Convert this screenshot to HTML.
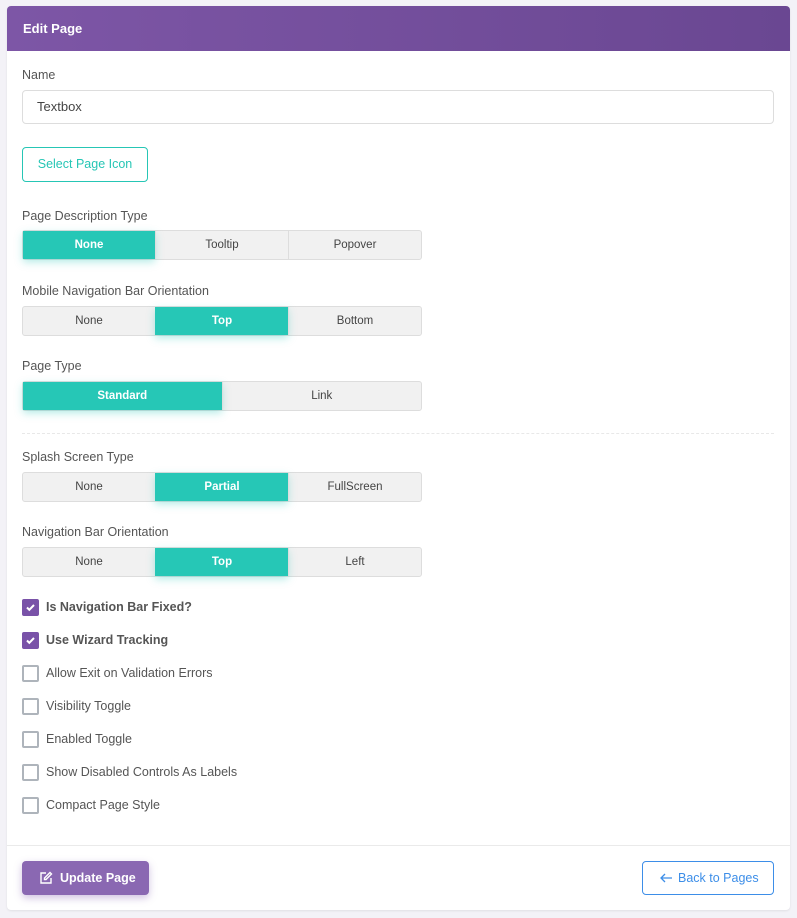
<!DOCTYPE html>
<html><head><style>
*{box-sizing:border-box;margin:0;padding:0}
body{width:797px;height:918px;background:#f3f2f7;font-family:"Liberation Sans",sans-serif;position:relative;overflow:hidden}
.card{position:absolute;left:7px;top:6px;width:783px;height:904px;background:#fff;border-radius:4px;box-shadow:0 1px 2px rgba(0,0,0,.08)}
.hdr{position:absolute;left:7px;top:6px;width:783px;height:45px;background:linear-gradient(90deg,#7d56a6,#6a4792);border-radius:4px 4px 0 0;color:#fff;font-weight:bold;font-size:13px;line-height:45px;padding-left:16px}
.a{position:absolute}
.lbl{position:absolute;left:22px;font-size:12.5px;color:#555}
.inp{left:22px;top:90px;width:752px;height:34px;border:1px solid #ddd;border-radius:4px;font-size:13px;color:#444;line-height:32px;padding-left:14px}
.sel{left:22px;top:147px;width:126px;height:35px;border:1px solid #26c6b5;border-radius:4px;color:#26c6b5;font-size:12.5px;line-height:33px;text-align:center}
.grp{position:absolute;left:22px;width:400px;height:30px;display:flex;border:1px solid #ddd;border-radius:3px;background:#f1f1f1}
.grp div{flex:1;text-align:center;font-size:11.5px;color:#444;line-height:28px;border-left:1px solid #ddd}
.grp div:first-child{border-left:none}
.grp .on{background:#26c7b6;color:#fff;font-weight:bold;box-shadow:0 3px 8px rgba(38,199,182,.35);border-color:#26c7b6}
.cb{position:absolute;left:22px;width:17px;height:17px;border:2px solid #aeb4bb;border-radius:2px}
.cb.on{background:#7952a8;border-color:#7952a8}
.cbt{position:absolute;left:46px;font-size:12.5px;color:#555}
</style></head><body>
<div class="card"></div>
<div class="hdr">Edit Page</div>
<div class="lbl" style="top:68px">Name</div>
<div class="a inp">Textbox</div>
<div class="a sel">Select Page Icon</div>
<div class="lbl" style="top:209px">Page Description Type</div>
<div class="grp" style="top:230px"><div class="on">None</div><div>Tooltip</div><div>Popover</div></div>
<div class="lbl" style="top:284px">Mobile Navigation Bar Orientation</div>
<div class="grp" style="top:306px"><div>None</div><div class="on">Top</div><div>Bottom</div></div>
<div class="lbl" style="top:359px">Page Type</div>
<div class="grp" style="top:381px"><div class="on">Standard</div><div>Link</div></div>
<div class="a" style="left:22px;top:433px;width:752px;border-top:1px dashed #e8e8e8"></div>
<div class="lbl" style="top:450px">Splash Screen Type</div>
<div class="grp" style="top:472px"><div>None</div><div class="on">Partial</div><div>FullScreen</div></div>
<div class="lbl" style="top:525px">Navigation Bar Orientation</div>
<div class="grp" style="top:547px"><div>None</div><div class="on">Top</div><div>Left</div></div>

<div class="cb on" style="top:599px"><svg width="13" height="13" viewBox="0 0 13 13"><path d="M3 6.5l2.3 2.3L10 4" stroke="#fff" stroke-width="2" fill="none"/></svg></div>
<div class="cbt" style="top:600px;font-weight:bold">Is Navigation Bar Fixed?</div>
<div class="cb on" style="top:632px"><svg width="13" height="13" viewBox="0 0 13 13"><path d="M3 6.5l2.3 2.3L10 4" stroke="#fff" stroke-width="2" fill="none"/></svg></div>
<div class="cbt" style="top:633px;font-weight:bold">Use Wizard Tracking</div>
<div class="cb" style="top:665px"></div><div class="cbt" style="top:666px">Allow Exit on Validation Errors</div>
<div class="cb" style="top:698px"></div><div class="cbt" style="top:699px">Visibility Toggle</div>
<div class="cb" style="top:731px"></div><div class="cbt" style="top:732px">Enabled Toggle</div>
<div class="cb" style="top:764px"></div><div class="cbt" style="top:765px">Show Disabled Controls As Labels</div>
<div class="cb" style="top:797px"></div><div class="cbt" style="top:798px">Compact Page Style</div>

<div class="a" style="left:7px;top:845px;width:783px;border-top:1px solid #eaeaea"></div>
<div class="a" style="left:22px;top:861px;width:127px;height:34px;background:#8a68b2;border-radius:4px;box-shadow:0 3px 8px rgba(120,80,170,.35);color:#fff;font-size:12.5px;font-weight:bold;line-height:34px;padding-left:38px">Update Page
<svg class="a" style="left:17px;top:10px" width="14" height="14" viewBox="0 0 14 14" fill="none" stroke="#fff" stroke-width="1.4"><path d="M7 2H2v10h10V7"/><path d="M11 1.5l1.5 1.5L7 8.5H5.5V7z"/></svg></div>
<div class="a" style="left:642px;top:861px;width:132px;height:34px;border:1px solid #3d8ee8;border-radius:4px;color:#3d8ee8;font-size:12.5px;line-height:32px;padding-left:35px">Back to Pages
<svg class="a" style="left:16px;top:9px" width="14" height="14" viewBox="0 0 14 14" fill="none" stroke="#3d8ee8" stroke-width="1.3"><path d="M13 7H2M6 3L2 7l4 4"/></svg></div>
</body></html>
